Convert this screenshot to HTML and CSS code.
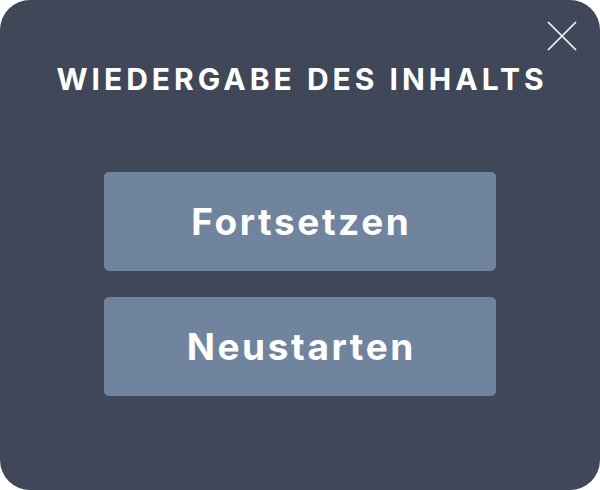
FILE: index.html
```html
<!DOCTYPE html>
<html lang="de">
<head>
<meta charset="utf-8">
<title>Wiedergabe des Inhalts</title>
<link rel="stylesheet" href="styles.css">
</head>
<body>
<div class="dialog">
  <button class="close" aria-label="Schließen">
    <svg width="30" height="30" viewBox="0 0 30 30"><path d="M1 1 L29 29 M29 1 L1 29" stroke="#fff" stroke-width="1.6" fill="none"/></svg>
  </button>
  <h1 class="title">WIEDERGABE DES INHALTS</h1>
  <div class="actions">
    <button class="btn">Fortsetzen</button>
    <button class="btn">Neustarten</button>
  </div>
</div>
</body>
</html>
```
FILE: styles.css
```css
html, body { margin: 0; padding: 0; background: #fff; }
.dialog {
  position: relative;
  width: 600px;
  height: 490px;
  box-sizing: border-box;
  background: #3f4759;
  border-radius: 30px;
  display: flex;
  flex-direction: column;
  align-items: center;
  font-family: Inter, "Open Sans", sans-serif;
  color: #fff;
}
.close {
  position: absolute;
  top: 21px;
  right: 23px;
  width: 30px;
  height: 30px;
  padding: 0;
  border: 0;
  background: none;
}
.close svg { display: block; }
.title {
  margin: 63px 0 0;
  padding-left: 4px;
  font-size: 30px;
  font-weight: 700;
  letter-spacing: 4px;
  line-height: 32px;
}
.actions {
  margin-top: 77px;
  display: flex;
  flex-direction: column;
  gap: 26px;
}
.btn {
  width: 392px;
  height: 99px;
  padding: 0 0 0 2.6px;
  border: 0;
  border-radius: 5px;
  background: #71849e;
  color: #fff;
  font-family: Inter, "Open Sans", sans-serif;
  font-size: 37px;
  font-weight: 700;
  letter-spacing: 2.6px;
}
```
